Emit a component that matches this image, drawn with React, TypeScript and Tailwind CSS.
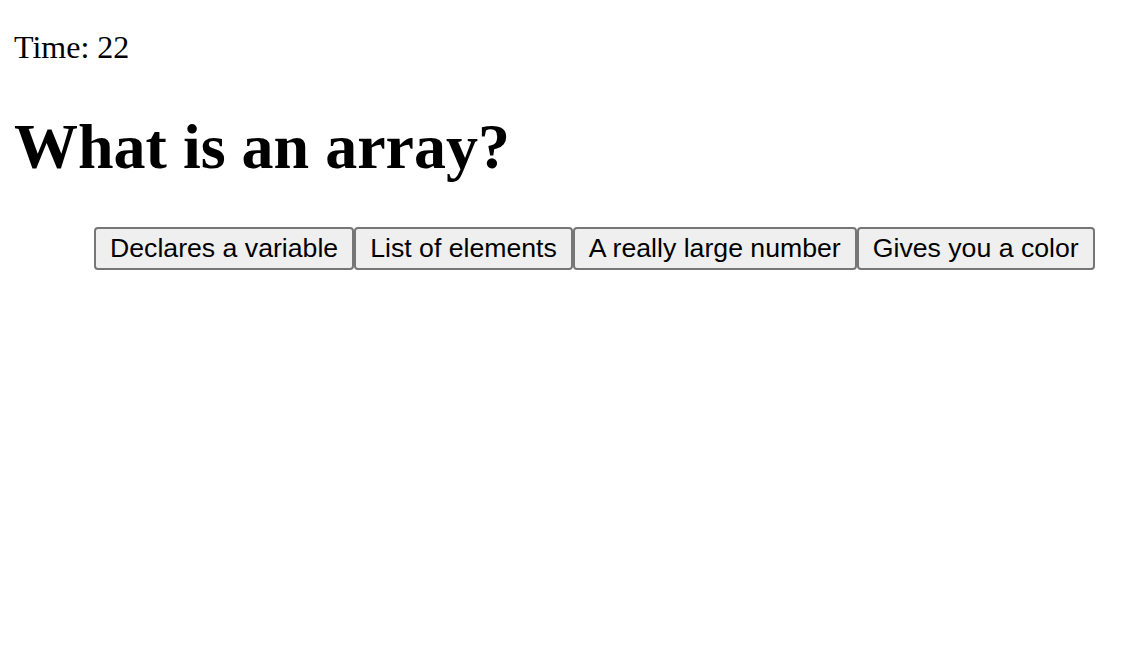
const answers = [
  "Declares a variable",
  "List of elements",
  "A really large number",
  "Gives you a color",
];

export default function App() {
  return (
    <div className="min-h-screen bg-white px-[14px] pt-[29px] font-['Liberation_Serif',serif] text-black">
      <div className="text-[32px] leading-[36px]">Time: 22</div>
      <h1 className="mt-[46px] text-[64px] font-bold leading-[71px]">What is an array?</h1>
      <div className="mt-[45px] ml-[80px] flex">
        {answers.map((a) => (
          <button
            key={a}
            className="rounded-[4px] border-2 border-[#767676] bg-[#efefef] px-[14px] py-[4px] font-['Liberation_Sans',Arial,sans-serif] text-[26.67px] leading-[31px] text-black"
          >
            {a}
          </button>
        ))}
      </div>
    </div>
  );
}
